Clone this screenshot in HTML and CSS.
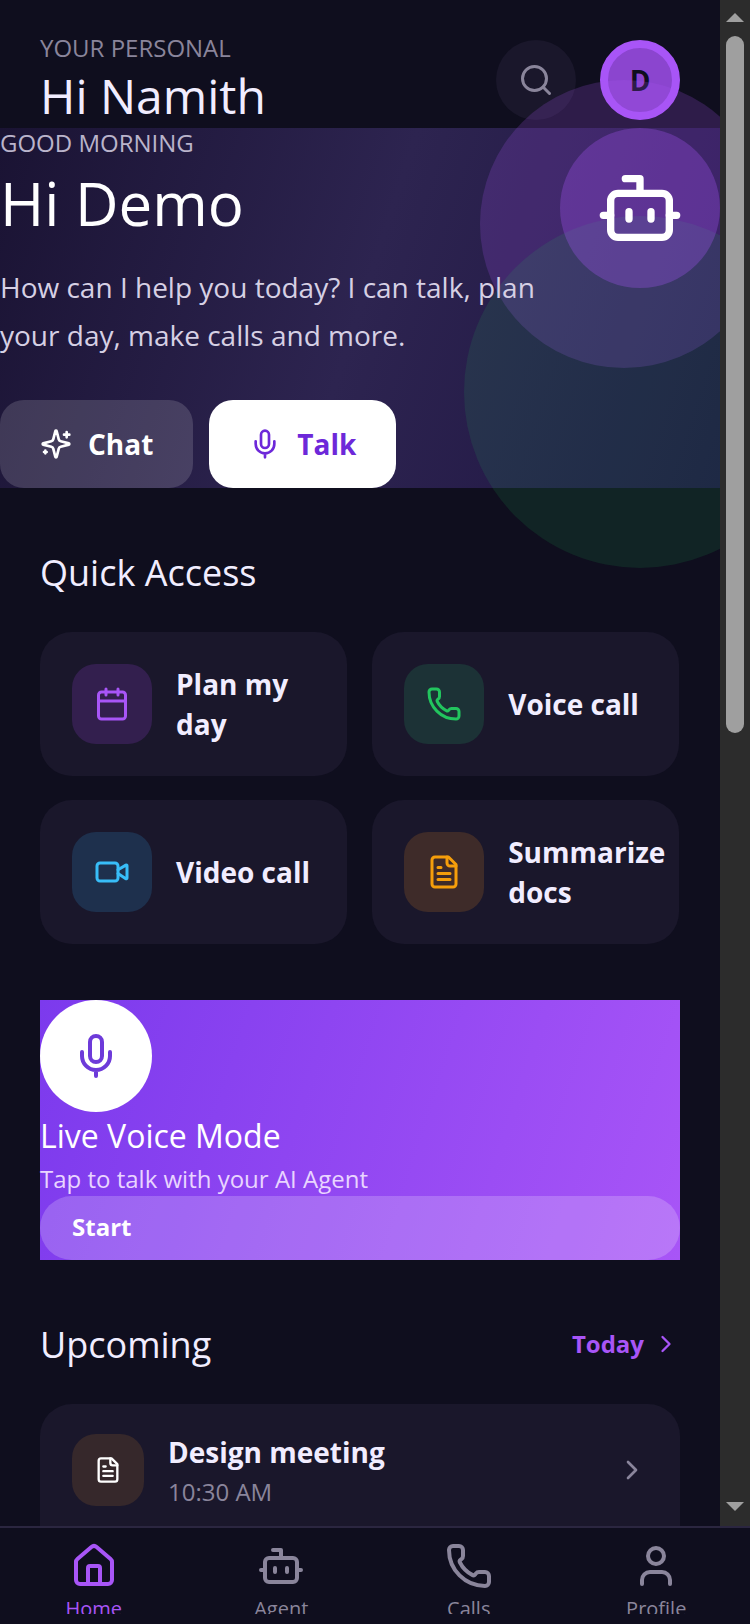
FILE: index.html
```html
<!DOCTYPE html>
<html lang="en">
<head>
  <meta charset="UTF-8" />
  <meta name="viewport" content="width=device-width, initial-scale=1.0"/>
  <title>Home</title>
  <link rel="stylesheet" href="styles.css">
</head>
<body>
  <!-- shared icons -->
  <svg class="sprite" aria-hidden="true">
    <symbol id="i-search" viewBox="0 0 24 24"><circle cx="11" cy="11" r="8"/><path d="m21 21-4.3-4.3"/></symbol>
    <symbol id="i-bot" viewBox="0 0 24 24"><path d="M12 8V4H8"/><rect width="16" height="12" x="4" y="8" rx="2"/><path d="M2 14h2M20 14h2M15 13v2M9 13v2"/></symbol>
    <symbol id="i-sparkles" viewBox="0 0 24 24"><path d="M9.937 15.5A2 2 0 0 0 8.5 14.063l-6.135-1.582a.5.5 0 0 1 0-.962L8.5 9.936A2 2 0 0 0 9.937 8.5l1.582-6.135a.5.5 0 0 1 .963 0L14.063 8.5A2 2 0 0 0 15.5 9.937l6.135 1.581a.5.5 0 0 1 0 .964L15.5 14.063a2 2 0 0 0-1.437 1.437l-1.582 6.135a.5.5 0 0 1-.963 0z"/><path d="M20 3v4M22 5h-4M4 17v2M5 18H3"/></symbol>
    <symbol id="i-mic" viewBox="0 0 24 24"><path d="M12 19v3M19 10v2a7 7 0 0 1-14 0v-2"/><rect x="9" y="2" width="6" height="13" rx="3"/></symbol>
    <symbol id="i-calendar" viewBox="0 0 24 24"><path d="M8 2v4M16 2v4M3 10h18"/><rect width="18" height="18" x="3" y="4" rx="2"/></symbol>
    <symbol id="i-phone" viewBox="0 0 24 24"><path d="M13.832 16.568a1 1 0 0 0 1.213-.303l.355-.465A2 2 0 0 1 17 15h3a2 2 0 0 1 2 2v3a2 2 0 0 1-2 2A18 18 0 0 1 2 4a2 2 0 0 1 2-2h3a2 2 0 0 1 2 2v3a2 2 0 0 1-.8 1.6l-.468.351a1 1 0 0 0-.292 1.233 14 14 0 0 0 6.392 6.384"/></symbol>
    <symbol id="i-video" viewBox="0 0 24 24"><path d="m16 13 5.223 3.482a.5.5 0 0 0 .777-.416V7.87a.5.5 0 0 0-.752-.432L16 10.5"/><rect x="2" y="6" width="14" height="12" rx="2"/></symbol>
    <symbol id="i-file" viewBox="0 0 24 24"><path d="M15 2H6a2 2 0 0 0-2 2v16a2 2 0 0 0 2 2h12a2 2 0 0 0 2-2V7Z"/><path d="M14 2v4a2 2 0 0 0 2 2h4M10 9H8M16 13H8M16 17H8"/></symbol>
    <symbol id="i-chevron" viewBox="0 0 24 24"><path d="m9 18 6-6-6-6"/></symbol>
    <symbol id="i-home" viewBox="0 0 24 24"><path d="M15 21v-8a1 1 0 0 0-1-1h-4a1 1 0 0 0-1 1v8"/><path d="M3 10a2 2 0 0 1 .709-1.528l7-5.999a2 2 0 0 1 2.582 0l7 5.999A2 2 0 0 1 21 10v9a2 2 0 0 1-2 2H5a2 2 0 0 1-2-2z"/></symbol>
    <symbol id="i-user" viewBox="0 0 24 24"><path d="M19 21v-2a4 4 0 0 0-4-4H9a4 4 0 0 0-4 4v2"/><circle cx="12" cy="7" r="4"/></symbol>
  </svg>

  <div class="app">
    <div class="view">
      <main class="page">
        <header class="header">
          <div>
            <p class="eyebrow">YOUR PERSONAL</p>
            <h1>Hi Namith</h1>
          </div>
          <div class="header-actions">
            <button class="search" aria-label="Search"><svg class="icon icon-36"><use href="#i-search"/></svg></button>
            <button class="avatar" aria-label="Account">D</button>
          </div>
        </header>

        <section class="hero">
          <span class="glow glow-purple"></span>
          <span class="glow glow-green"></span>
          <div class="bot"><svg class="icon icon-88"><use href="#i-bot"/></svg></div>
          <div class="hero-text">
            <p class="greeting">GOOD MORNING</p>
            <h2>Hi Demo</h2>
            <p class="intro">How can I help you today? I can talk, plan your day, make calls and more.</p>
            <div class="hero-buttons">
              <button class="btn chat"><svg class="icon icon-32"><use href="#i-sparkles"/></svg>Chat</button>
              <button class="btn talk"><svg class="icon icon-32"><use href="#i-mic"/></svg>Talk</button>
            </div>
          </div>
        </section>

        <section class="section">
          <div class="section-head">
            <h3>Quick Access</h3>
          </div>
          <div class="cards">
            <button class="card"><span class="tile purple"><svg class="icon icon-36"><use href="#i-calendar"/></svg></span><span>Plan my day</span></button>
            <button class="card"><span class="tile green"><svg class="icon icon-36"><use href="#i-phone"/></svg></span><span>Voice call</span></button>
            <button class="card"><span class="tile blue"><svg class="icon icon-36"><use href="#i-video"/></svg></span><span>Video call</span></button>
            <button class="card"><span class="tile orange"><svg class="icon icon-36"><use href="#i-file"/></svg></span><span>Summarize docs</span></button>
          </div>
        </section>

        <section class="live">
          <div class="live-mic"><svg class="icon icon-48"><use href="#i-mic"/></svg></div>
          <h3>Live Voice Mode</h3>
          <p>Tap to talk with your AI Agent</p>
          <button class="start">Start</button>
        </section>

        <section class="section">
          <div class="section-head">
            <h3>Upcoming</h3>
            <a href="#" class="today">Today<svg class="icon icon-28"><use href="#i-chevron"/></svg></a>
          </div>
          <div class="list">
            <a href="#" class="event">
              <span class="event-tile"><svg class="icon icon-28"><use href="#i-file"/></svg></span>
              <span class="event-text">
                <span class="event-title">Design meeting</span>
                <span class="event-time">10:30 AM</span>
              </span>
              <svg class="icon icon-32"><use href="#i-chevron"/></svg>
            </a>
          </div>
        </section>
      </main>

      <div class="scrollbar" aria-hidden="true">
        <span class="arrow-up"></span>
        <span class="track"><span class="thumb"></span></span>
        <span class="arrow-down"></span>
      </div>
    </div>

    <nav class="tabs">
      <a href="#" class="tab active"><svg class="icon icon-48"><use href="#i-home"/></svg><span>Home</span></a>
      <a href="#" class="tab"><svg class="icon icon-48"><use href="#i-bot"/></svg><span>Agent</span></a>
      <a href="#" class="tab"><svg class="icon icon-48"><use href="#i-phone"/></svg><span>Calls</span></a>
      <a href="#" class="tab"><svg class="icon icon-48"><use href="#i-user"/></svg><span>Profile</span></a>
    </nav>
  </div>
</body>
</html>
```
FILE: styles.css
```css
* {
  box-sizing: border-box;
}
body {
  margin: 0;
  font-family: "Open Sans", "Noto Sans", sans-serif;
  background: #0f0e1e;
  color: #f1edff;
}
h1, h2, h3, p {
  margin: 0;
  font-weight: 400;
}
button {
  border: none;
  font-family: inherit;
  cursor: pointer;
}
a {
  color: inherit;
  text-decoration: none;
}
.sprite {
  display: none;
}
.icon {
  display: block;
  flex-shrink: 0;
  fill: none;
  stroke: currentColor;
  stroke-width: 2;
  stroke-linecap: round;
  stroke-linejoin: round;
}
.icon-28 { width: 28px; height: 28px; }
.icon-32 { width: 32px; height: 32px; }
.icon-36 { width: 36px; height: 36px; }
.icon-48 { width: 48px; height: 48px; }
.icon-88 { width: 88px; height: 88px; }

.app {
  display: flex;
  flex-direction: column;
  height: 100vh;
  overflow: hidden;
}
.view {
  display: flex;
  flex: 1;
  min-height: 0;
}
.page {
  flex: 1;
  min-width: 0;
  overflow: hidden;
}

/* header */
.header {
  display: flex;
  justify-content: space-between;
  align-items: center;
  padding: 32px 40px 0;
}
.eyebrow {
  font-size: 24px;
  line-height: 32px;
  color: #8a859b;
}
h1 {
  font-size: 48px;
  line-height: 64px;
}
.header-actions {
  display: flex;
  gap: 24px;
}
.search, .avatar {
  display: flex;
  align-items: center;
  justify-content: center;
  width: 80px;
  height: 80px;
  padding: 0;
  border-radius: 50%;
}
.search {
  background: #1a172b;
  color: #8a859b;
}
.avatar {
  border: 8px solid #a855f7;
  background: #8b45cf;
  color: #0f0e1e;
  font-size: 28px;
  font-weight: 700;
}

/* hero */
.hero {
  position: relative;
  background: linear-gradient(108deg, #1a1333, #2d2450 50%, #1e1442);
}
.glow, .bot {
  position: absolute;
  border-radius: 50%;
}
.glow-purple {
  top: -48px;
  right: -48px;
  width: 288px;
  height: 288px;
  background: rgba(168, 85, 247, 0.2);
}
.glow-green {
  right: -96px;
  bottom: -80px;
  width: 352px;
  height: 352px;
  background: rgba(34, 197, 94, 0.12);
}
.bot {
  top: 0;
  right: 0;
  display: flex;
  align-items: center;
  justify-content: center;
  width: 160px;
  height: 160px;
  background: rgba(168, 85, 247, 0.3);
  color: #fff;
}
.hero-text {
  position: relative;
}
.greeting {
  font-size: 24px;
  line-height: 30px;
  color: #bab4cb;
}
h2 {
  margin-top: 9px;
  font-size: 60px;
  line-height: 72px;
  color: #fff;
}
.intro {
  max-width: 560px;
  margin-top: 24px;
  font-size: 28px;
  line-height: 48px;
  color: #d6d0e4;
}
.hero-buttons {
  display: flex;
  gap: 16px;
  padding-top: 41px;
}
.btn {
  display: flex;
  align-items: center;
  gap: 16px;
  height: 88px;
  padding: 0 40px;
  border-radius: 24px;
  font-size: 28px;
  font-weight: 700;
}
.chat {
  background: rgba(255, 255, 255, 0.15);
  color: #fff;
}
.talk {
  background: #fff;
  color: #6d28d9;
}

/* sections */
.section {
  padding: 60px 40px 0;
}
.section-head {
  display: flex;
  justify-content: space-between;
  align-items: flex-start;
  margin-bottom: 34px;
}
.section-head h3 {
  font-size: 36px;
  line-height: 50px;
}
.cards {
  display: flex;
  flex-wrap: wrap;
  gap: 24px 25px;
}
.card {
  display: flex;
  align-items: center;
  gap: 24px;
  width: 48%;
  min-height: 144px;
  padding: 32px 12px 32px 32px;
  border-radius: 32px;
  background: #1a172b;
  color: #f1edff;
  font-size: 28px;
  line-height: 40px;
  font-weight: 700;
  text-align: left;
}
.tile, .event-tile {
  display: flex;
  flex-shrink: 0;
  align-items: center;
  justify-content: center;
  border-radius: 24px;
}
.tile {
  width: 80px;
  height: 80px;
}
.purple { background: #331f4e; color: #a855f7; }
.green { background: #1c3236; color: #22c55e; }
.blue { background: #1e304d; color: #38bdf8; }
.orange { background: #3e2b29; color: #f59e0b; }

/* live voice */
.live {
  margin: 56px 40px 0;
  background: linear-gradient(108deg, #7c3aed, #a855f7);
  color: #fff;
}
.live-mic {
  display: flex;
  align-items: center;
  justify-content: center;
  width: 112px;
  height: 112px;
  border-radius: 50%;
  background: #fff;
  color: #6d3ad9;
}
.live h3 {
  font-size: 32px;
  line-height: 48px;
}
.live p {
  margin: 4px 0 2px;
  font-size: 24px;
  line-height: 30px;
  color: #e9d5ff;
}
.start {
  display: block;
  width: 100%;
  height: 64px;
  padding: 0 32px 4px;
  border-radius: 32px;
  background: rgba(255, 255, 255, 0.2);
  color: #fff;
  font-size: 24px;
  font-weight: 700;
  text-align: left;
}

/* upcoming */
.today {
  display: flex;
  align-items: center;
  gap: 8px;
  color: #a855f7;
  font-size: 24px;
  line-height: 48px;
  font-weight: 700;
}
.list {
  padding-bottom: 32px;
  border-radius: 32px;
  background: #1a172b;
}
.event {
  display: flex;
  align-items: center;
  gap: 24px;
  padding: 28px 32px;
  color: #8a859b;
}
.event-tile {
  width: 72px;
  height: 72px;
  background: #36282b;
  color: #fff;
}
.event-text {
  display: flex;
  flex: 1;
  flex-direction: column;
  gap: 4px;
}
.event-title {
  color: #f1edff;
  font-size: 28px;
  line-height: 40px;
  font-weight: 700;
}
.event-time {
  font-size: 24px;
  line-height: 32px;
}

/* scrollbar */
.scrollbar {
  display: flex;
  flex-direction: column;
  gap: 14px;
  width: 30px;
  padding: 13px 6px 15px;
  background: #2c2c2c;
}
.arrow-up, .arrow-down {
  border: 9px solid transparent;
}
.arrow-up {
  border-top: none;
  border-bottom-color: #9f9f9f;
}
.arrow-down {
  border-bottom: none;
  border-top-color: #9f9f9f;
}
.track {
  flex: 1;
}
.thumb {
  display: block;
  height: 48%;
  border-radius: 9px;
  background: #9f9f9f;
}

/* bottom tabs */
.tabs {
  display: flex;
  height: 98px;
  padding: 14px 0 10px;
  border-top: 2px solid #2b2640;
  background: #0f0e1e;
}
.tab {
  display: flex;
  flex: 1;
  flex-direction: column;
  align-items: center;
  gap: 4px;
  overflow: hidden;
  color: #8a859b;
  font-size: 20px;
  line-height: 30px;
}
.active {
  color: #a855f7;
}
```
